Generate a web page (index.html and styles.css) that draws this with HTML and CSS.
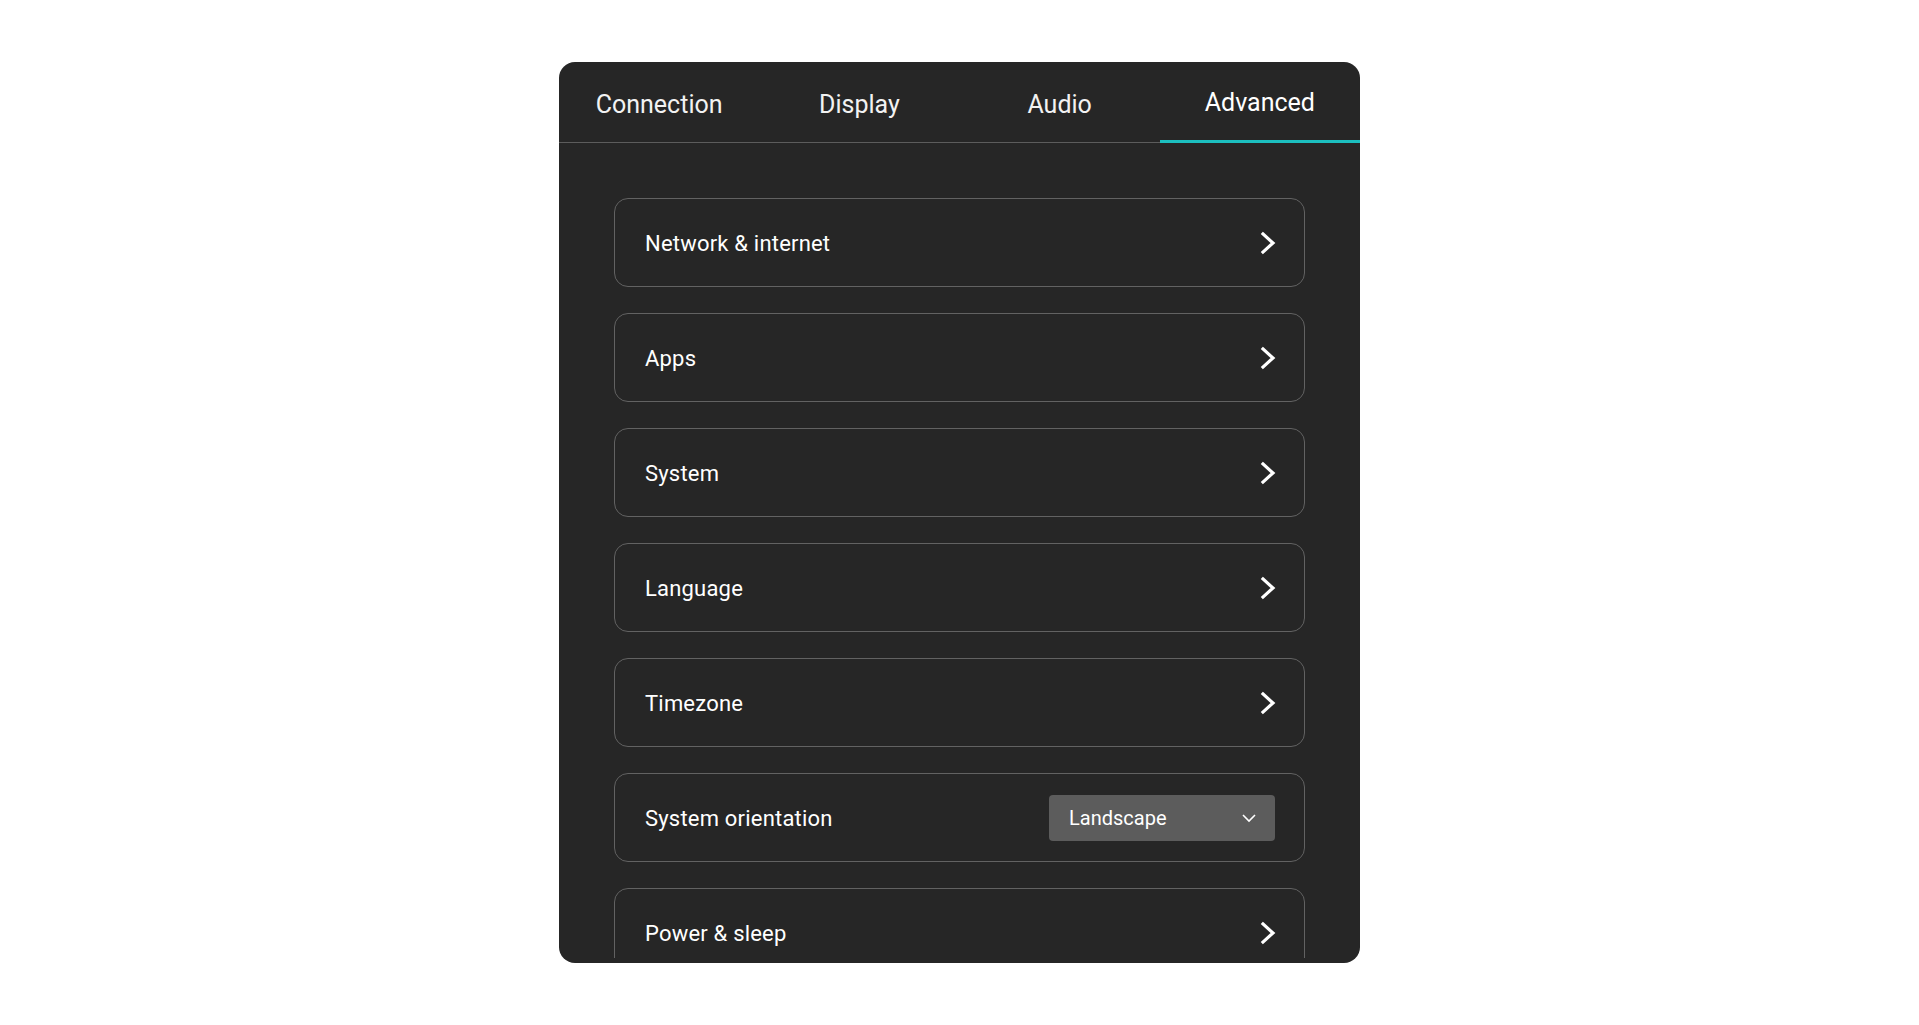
FILE: index.html
```html
<!DOCTYPE html>
<html lang="en">
<head>
<meta charset="utf-8">
<title>Settings</title>
<link rel="stylesheet" href="styles.css">
</head>
<body>
<div class="panel">
  <nav class="tabs">
    <div class="tab">Connection</div>
    <div class="tab">Display</div>
    <div class="tab">Audio</div>
    <div class="tab active">Advanced</div>
  </nav>
  <div class="content">
    <div class="list">
      <div class="row"><span class="label">Network &amp; internet</span><svg class="chev" width="16" height="24" viewBox="0 0 16 24"><polyline points="3,3 13,12 3,21" fill="none" stroke="#fff" stroke-width="3.2" stroke-linecap="square"/></svg></div>
      <div class="row"><span class="label">Apps</span><svg class="chev" width="16" height="24" viewBox="0 0 16 24"><polyline points="3,3 13,12 3,21" fill="none" stroke="#fff" stroke-width="3.2" stroke-linecap="square"/></svg></div>
      <div class="row"><span class="label">System</span><svg class="chev" width="16" height="24" viewBox="0 0 16 24"><polyline points="3,3 13,12 3,21" fill="none" stroke="#fff" stroke-width="3.2" stroke-linecap="square"/></svg></div>
      <div class="row"><span class="label">Language</span><svg class="chev" width="16" height="24" viewBox="0 0 16 24"><polyline points="3,3 13,12 3,21" fill="none" stroke="#fff" stroke-width="3.2" stroke-linecap="square"/></svg></div>
      <div class="row"><span class="label">Timezone</span><svg class="chev" width="16" height="24" viewBox="0 0 16 24"><polyline points="3,3 13,12 3,21" fill="none" stroke="#fff" stroke-width="3.2" stroke-linecap="square"/></svg></div>
      <div class="row select-row"><span class="label">System orientation</span>
        <div class="select"><span>Landscape</span><svg width="16" height="10" viewBox="0 0 16 10"><polyline points="2,2 8,8 14,2" fill="none" stroke="#fff" stroke-width="1.6"/></svg></div>
      </div>
      <div class="row"><span class="label">Power &amp; sleep</span><svg class="chev" width="16" height="24" viewBox="0 0 16 24"><polyline points="3,3 13,12 3,21" fill="none" stroke="#fff" stroke-width="3.2" stroke-linecap="square"/></svg></div>
    </div>
  </div>
</div>
</body>
</html>
```
FILE: styles.css
```css
* { box-sizing: border-box; }
html, body { margin: 0; padding: 0; background: #ffffff; }
body { font-family: Roboto, "Liberation Sans", sans-serif; }

.panel {
  width: 801px;
  height: 901px;
  margin: 62px auto 0;
  background: #262626;
  border-radius: 16px;
  overflow: hidden;
  display: flex;
  flex-direction: column;
  padding-bottom: 5px;
}

.tabs {
  display: grid;
  grid-template-columns: repeat(4, 1fr);
  height: 81px;
  border-bottom: 1px solid #5c5c5c;
  flex: none;
}

.tab {
  display: flex;
  align-items: center;
  justify-content: center;
  padding-top: 5px;
  font-size: 25px;
  color: #f2f2f2;
}

.tab.active {
  border-bottom: 3px solid #1cbfbf;
  margin-bottom: -1px;
  padding-top: 2px;
  color: #ffffff;
}

.content {
  flex: 1;
  overflow: hidden;
  padding: 55px 55px 0;
}

.list {
  display: flex;
  flex-direction: column;
  gap: 26px;
}

.row {
  flex: none;
  height: 89px;
  border: 1px solid #626262;
  border-radius: 14px;
  display: flex;
  align-items: center;
  justify-content: space-between;
  padding: 1px 28px 0 30px;
  color: #ffffff;
  font-size: 22px;
}

.label { letter-spacing: 0.2px; }

.chev { display: block; }

.select-row { padding-right: 29px; }

.select {
  width: 226px;
  height: 46px;
  background: #5c5c5c;
  border-radius: 4px;
  display: flex;
  align-items: center;
  justify-content: space-between;
  padding: 0 18px 0 20px;
  font-size: 20px;
  color: #ffffff;
}
.select svg { display: block; }
```
